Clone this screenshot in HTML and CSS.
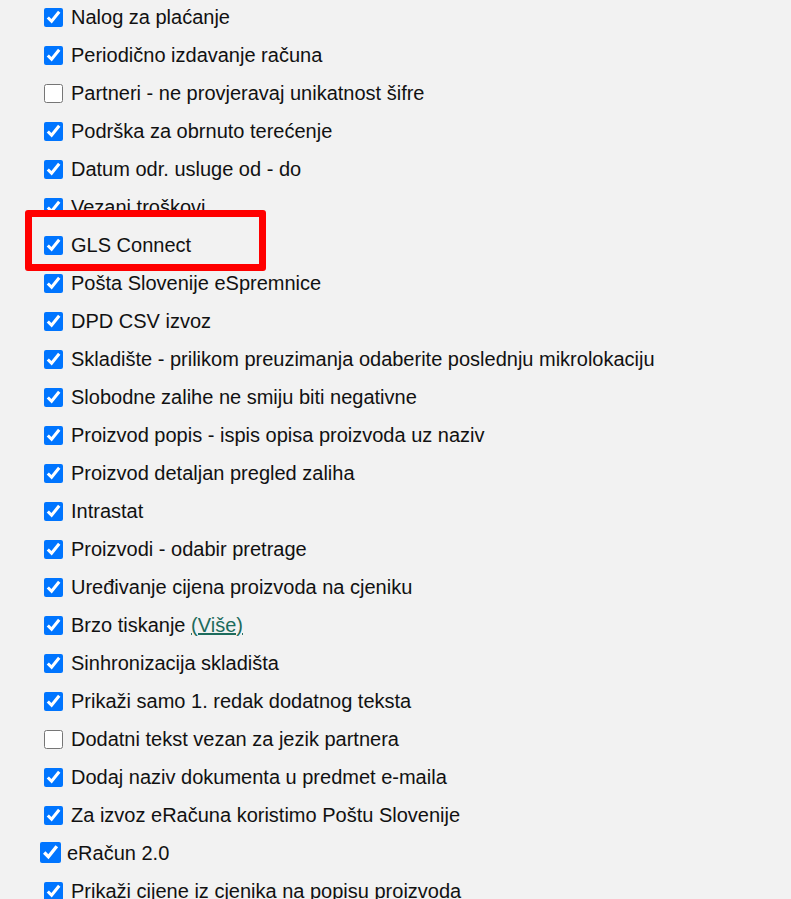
FILE: index.html
```html
<!DOCTYPE html>
<html>
<head>
<meta charset="utf-8">
<link rel="stylesheet" href="styles.css">
</head>
<body>
<ul class="opts">
  <li class="opt"><input type="checkbox" checked><span>Nalog za plaćanje</span></li>
  <li class="opt"><input type="checkbox" checked><span>Periodično izdavanje računa</span></li>
  <li class="opt"><input type="checkbox"><span>Partneri - ne provjeravaj unikatnost šifre</span></li>
  <li class="opt"><input type="checkbox" checked><span>Podrška za obrnuto terećenje</span></li>
  <li class="opt"><input type="checkbox" checked><span>Datum odr. usluge od - do</span></li>
  <li class="opt"><input type="checkbox" checked><span>Vezani troškovi</span></li>
  <li class="opt highlight"><input type="checkbox" checked><span>GLS Connect</span><div class="mark"></div></li>
  <li class="opt"><input type="checkbox" checked><span>Pošta Slovenije eSpremnice</span></li>
  <li class="opt"><input type="checkbox" checked><span>DPD CSV izvoz</span></li>
  <li class="opt"><input type="checkbox" checked><span>Skladište - prilikom preuzimanja odaberite poslednju mikrolokaciju</span></li>
  <li class="opt"><input type="checkbox" checked><span>Slobodne zalihe ne smiju biti negativne</span></li>
  <li class="opt"><input type="checkbox" checked><span>Proizvod popis - ispis opisa proizvoda uz naziv</span></li>
  <li class="opt"><input type="checkbox" checked><span>Proizvod detaljan pregled zaliha</span></li>
  <li class="opt"><input type="checkbox" checked><span>Intrastat</span></li>
  <li class="opt"><input type="checkbox" checked><span>Proizvodi - odabir pretrage</span></li>
  <li class="opt"><input type="checkbox" checked><span>Uređivanje cijena proizvoda na cjeniku</span></li>
  <li class="opt"><input type="checkbox" checked><span>Brzo tiskanje <a class="more" href="#">(Više)</a></span></li>
  <li class="opt"><input type="checkbox" checked><span>Sinhronizacija skladišta</span></li>
  <li class="opt"><input type="checkbox" checked><span>Prikaži samo 1. redak dodatnog teksta</span></li>
  <li class="opt"><input type="checkbox"><span>Dodatni tekst vezan za jezik partnera</span></li>
  <li class="opt"><input type="checkbox" checked><span>Dodaj naziv dokumenta u predmet e-maila</span></li>
  <li class="opt"><input type="checkbox" checked><span>Za izvoz eRačuna koristimo Poštu Slovenije</span></li>
  <li class="opt wide"><input type="checkbox" checked><span>eRačun 2.0</span></li>
  <li class="opt"><input type="checkbox" checked><span>Prikaži cijene iz cjenika na popisu proizvoda</span></li>
</ul>
</body>
</html>
```
FILE: styles.css
```css
html, body {
  margin: 0;
  padding: 0;
  background: #f2f2f2;
}
body {
  font-family: "Liberation Sans", Arial, sans-serif;
  font-size: 20px;
  color: #111;
  overflow: hidden;
}
.opts {
  list-style: none;
  margin: 0;
  padding: 0 0 0 44px;
  display: flex;
  flex-direction: column;
  margin-top: -2px;
}
.opt {
  position: relative;
  height: 38px;
  display: flex;
  align-items: center;
  gap: 8px;
}
.opt input {
  width: 19px;
  height: 19px;
  margin: 0;
  accent-color: #0075ff;
  flex: none;
}
.opt.wide {
  margin-left: -4px;
  gap: 6px;
}
.opt.wide input {
  width: 21px;
  height: 21px;
  margin-top: -2px;
}
.more {
  color: #1d6b5c;
  text-decoration: underline;
}
.mark {
  position: absolute;
  left: -19px;
  top: -16px;
  width: 227px;
  height: 47px;
  border: 7px solid #ff0000;
  border-radius: 3px;
  pointer-events: none;
}
```
